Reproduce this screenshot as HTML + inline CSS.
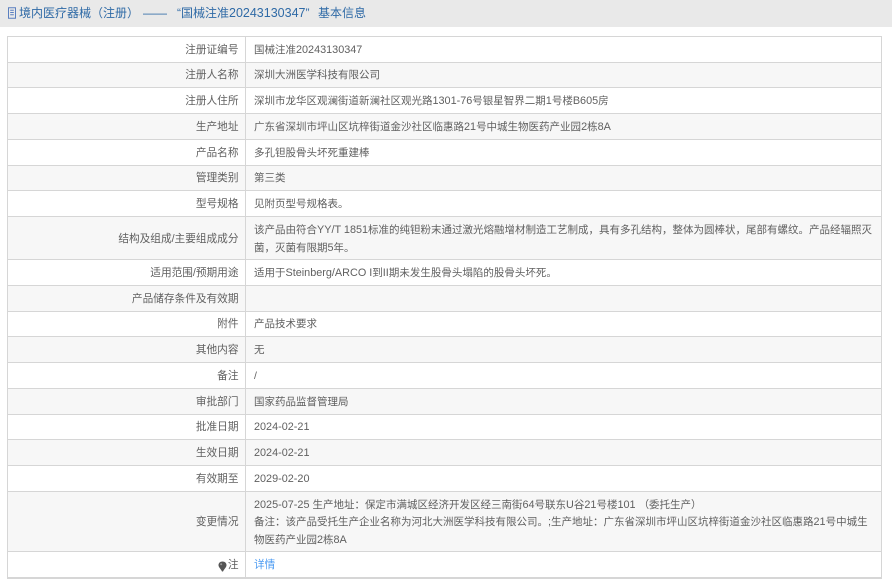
<!DOCTYPE html>
<html lang="zh-CN">
<head>
<meta charset="utf-8">
<style>
html,body{margin:0;padding:0;background:#fff;}
body{width:892px;height:588px;position:relative;overflow:hidden;font-family:"Liberation Sans","Noto Sans CJK SC",sans-serif;color:#606060;font-size:10.5px;}
.hd{position:absolute;left:0;top:0;width:892px;height:27px;background:#e9e9e9;}
.hd span{position:absolute;top:0;line-height:26px;font-size:12px;color:#2f6aa6;white-space:nowrap;}
.hd span i{font-style:normal;font-size:12.5px;}
.hd svg{position:absolute;left:7px;top:7px;}
.r{position:absolute;left:7px;width:875px;box-sizing:border-box;border-top:1px solid #d6d6d6;border-left:1px solid #d6d6d6;border-right:1px solid #d6d6d6;}
.g{background:#f7f7f7;}
.l{position:absolute;right:642.5px;top:3px;bottom:0;display:flex;align-items:center;white-space:nowrap;line-height:17.3px;font-size:10.67px;}
.v{position:absolute;left:246px;top:3px;bottom:0;display:flex;align-items:center;white-space:nowrap;line-height:17.3px;}
.s .l,.s .v{top:1px;}
.c{position:absolute;left:237px;top:0;bottom:0;width:1px;background:#d6d6d6;}
i{font-style:normal;font-size:10.85px;}
a{color:#4c9bf2;text-decoration:none;font-size:10.67px;}
</style>
</head>
<body>
<div class="hd">
<svg width="10" height="12" viewBox="0 0 10 12"><path d="M1.500 .8H8.500V11.200H1.500ZM3.200 3.200H6.800M3.200 5.500H6.800M3.200 7.800H6.800" fill="none" stroke="#5a7fc0" stroke-width="1"/></svg>
<span style="left:19px">境内医疗器械（注册）</span>
<span style="left:143px">——</span>
<span style="left:177px">“国械注准<i>20243130347</i>”</span>
<span style="left:318px">基本信息</span>
</div>

<div class="r" style="top:36px;height:26px"><div class="l">注册证编号</div><div class="c"></div><div class="v"><div>国械注准<i>20243130347</i></div></div></div>
<div class="r g s" style="top:62px;height:25px"><div class="l">注册人名称</div><div class="c"></div><div class="v">深圳大洲医学科技有限公司</div></div>
<div class="r" style="top:87px;height:26px"><div class="l">注册人住所</div><div class="c"></div><div class="v"><div>深圳市龙华区观澜街道新澜社区观光路<i>1301-76</i>号银星智界二期<i>1</i>号楼<i>B605</i>房</div></div></div>
<div class="r g" style="top:113px;height:26px"><div class="l">生产地址</div><div class="c"></div><div class="v"><div>广东省深圳市坪山区坑梓街道金沙社区临惠路<i>21</i>号中城生物医药产业园<i>2</i>栋<i>8A</i></div></div></div>
<div class="r" style="top:139px;height:26px"><div class="l">产品名称</div><div class="c"></div><div class="v">多孔钽股骨头坏死重建棒</div></div>
<div class="r g s" style="top:165px;height:25px"><div class="l">管理类别</div><div class="c"></div><div class="v">第三类</div></div>
<div class="r" style="top:190px;height:26px"><div class="l">型号规格</div><div class="c"></div><div class="v">见附页型号规格表。</div></div>
<div class="r g" style="top:216px;height:43px"><div class="l">结构及组成/主要组成成分</div><div class="c"></div><div class="v"><div>该产品由符合<i>YY/T 1851</i>标准的纯钽粉末通过激光熔融增材制造工艺制成，具有多孔结构，整体为圆棒状，尾部有螺纹。产品经辐照灭<br>菌，灭菌有限期<i>5</i>年。</div></div></div>
<div class="r" style="top:259px;height:26px"><div class="l">适用范围/预期用途</div><div class="c"></div><div class="v"><div>适用于<i>Steinberg/ARCO I</i>到<i>II</i>期未发生股骨头塌陷的股骨头坏死。</div></div></div>
<div class="r g" style="top:285px;height:26px"><div class="l">产品储存条件及有效期</div><div class="c"></div></div>
<div class="r s" style="top:311px;height:25px"><div class="l">附件</div><div class="c"></div><div class="v">产品技术要求</div></div>
<div class="r g" style="top:336px;height:26px"><div class="l">其他内容</div><div class="c"></div><div class="v">无</div></div>
<div class="r" style="top:362px;height:26px"><div class="l">备注</div><div class="c"></div><div class="v">/</div></div>
<div class="r g" style="top:388px;height:26px"><div class="l">审批部门</div><div class="c"></div><div class="v">国家药品监督管理局</div></div>
<div class="r s" style="top:414px;height:25px"><div class="l">批准日期</div><div class="c"></div><div class="v"><i>2024-02-21</i></div></div>
<div class="r g" style="top:439px;height:26px"><div class="l">生效日期</div><div class="c"></div><div class="v"><i>2024-02-21</i></div></div>
<div class="r" style="top:465px;height:26px"><div class="l">有效期至</div><div class="c"></div><div class="v"><i>2029-02-20</i></div></div>
<div class="r g" style="top:491px;height:60px"><div class="l">变更情况</div><div class="c"></div><div class="v"><div><i>2025-07-25 </i>生产地址：保定市满城区经济开发区经三南街<i>64</i>号联东<i>U</i>谷<i>21</i>号楼<i>101 </i>（委托生产）<br>备注：该产品受托生产企业名称为河北大洲医学科技有限公司。<i>;</i>生产地址：广东省深圳市坪山区坑梓街道金沙社区临惠路<i>21</i>号中城生<br>物医药产业园<i>2</i>栋<i>8A</i></div></div></div>
<div class="r" style="top:551px;height:28px;border-bottom:2px solid #d6d6d6"><div class="l"><svg width="9" height="11" viewBox="0 0 9 11" style="margin-right:1px"><path d="M4.500 .5C6.900 .5 8.500 2.100 8.500 4.200 8.500 6.400 6 8 5 10.500H4C3 8 .5 6.400 .5 4.200 .5 2.100 2.100 .5 4.500 .5Z" fill="#555"/><circle cx="3.200" cy="3.200" r="1" fill="#999"/></svg>注</div><div class="c"></div><div class="v"><a href="#">详情</a></div></div>
</body>
</html>
